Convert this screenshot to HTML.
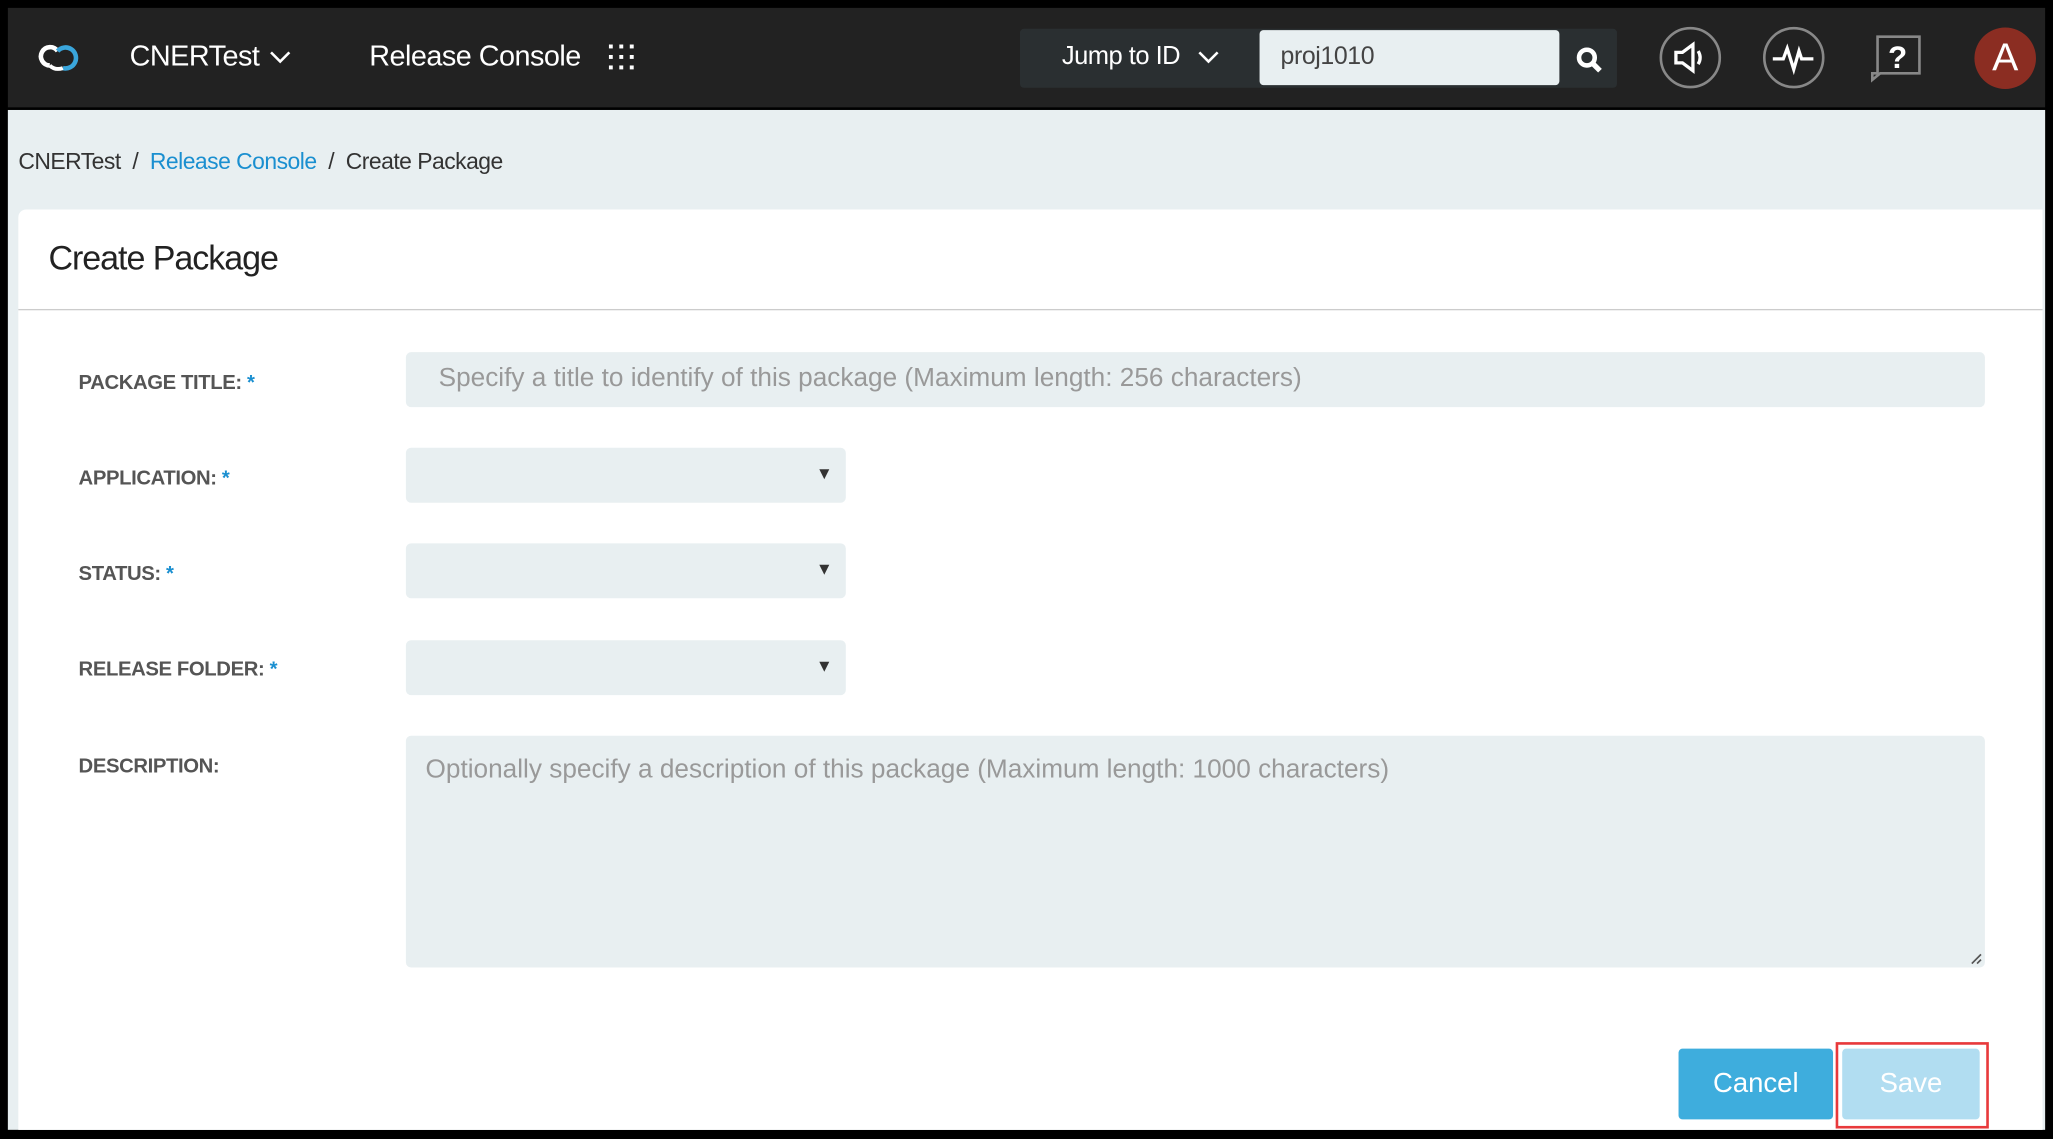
<!DOCTYPE html>
<html><head><meta charset="utf-8"><style>
html,body{margin:0;padding:0;background:#000;overflow:hidden}
body{width:2053px;height:1139px}
#w{position:absolute;left:0;top:0;width:1568px;height:870px;transform:scale(1.30931,1.30920);transform-origin:0 0;font-family:"Liberation Sans",sans-serif}
.a{position:absolute}
.hdr{left:6px;top:6px;width:1556px;height:76px;background:#222}
.t{color:#fff;font-size:22px;letter-spacing:-.4px}
.lbl{position:absolute;left:60px;font-size:15.5px;font-weight:bold;color:#555;letter-spacing:-.3px}
.lbl b{color:#1a8fd0}
.in{position:absolute;left:310px;background:#e8eff1;border-radius:4px;height:42px}
.sel{width:336px}
.sel:after{content:"▼";position:absolute;right:10px;top:12px;font-size:13px;color:#333}
.ph{color:#999;font-size:20px;position:absolute;left:25px;top:9px}
</style></head><body><div id="w">
<div class="a hdr"></div>
<svg class="a" style="left:24px;top:30px" width="44" height="28" viewBox="0 0 44 28"><path d="M14 20a7 7 0 1 1 6-11" stroke="#fff" stroke-width="3.5" fill="none"/><path d="M20 9a8 8 0 1 1 4 13" stroke="#3aa6dc" stroke-width="3.5" fill="none"/><path d="M14 20q4 4 10 2" stroke="#fff" stroke-width="3" fill="none"/></svg>
<div class="a t" style="left:99px;top:30px">CNERTest</div>
<svg class="a" style="left:206px;top:39px" width="16" height="10"><path d="M1 1l7 7 7-7" stroke="#fff" stroke-width="2" fill="none"/></svg>
<div class="a t" style="left:282px;top:30px">Release Console</div>
<svg class="a" style="left:465px;top:34px" width="20" height="20"><g fill="#fff"><rect x="0" y="0" width="3" height="3"/><rect x="8" y="0" width="3" height="3"/><rect x="16" y="0" width="3" height="3"/><rect x="0" y="8" width="3" height="3"/><rect x="8" y="8" width="3" height="3"/><rect x="16" y="8" width="3" height="3"/><rect x="0" y="16" width="3" height="3"/><rect x="8" y="16" width="3" height="3"/><rect x="16" y="16" width="3" height="3"/></g></svg>
<div class="a" style="left:779px;top:22px;width:456px;height:45px;background:#2a2f31;border-radius:3px"></div>
<div class="a t" style="left:811px;top:32px;font-size:19.5px">Jump to ID</div>
<svg class="a" style="left:915px;top:39px" width="16" height="10"><path d="M1 1l7 7 7-7" stroke="#fff" stroke-width="2" fill="none"/></svg>
<div class="a" style="left:962px;top:23px;width:229px;height:42px;background:#e8eff1;border-radius:3px"></div>
<div class="a" style="left:978px;top:33px;font-size:19px;color:#444;letter-spacing:-.3px">proj1010</div>
<svg class="a" style="left:1203px;top:35px" width="22" height="22"><circle cx="9" cy="9" r="6" stroke="#fff" stroke-width="3.5" fill="none"/><path d="M13 13l6 6" stroke="#fff" stroke-width="4"/></svg>
<svg class="a" style="left:1266px;top:19px" width="50" height="50"><circle cx="25" cy="25" r="22.5" stroke="#888" stroke-width="2" fill="none"/><path d="M14 21h5l8-6v20l-8-6h-5z" stroke="#fff" stroke-width="2.5" fill="none"/><path d="M31 20q3 5 0 10" stroke="#fff" stroke-width="2.5" fill="none"/></svg>
<svg class="a" style="left:1345px;top:19px" width="50" height="50"><circle cx="25" cy="25" r="22.5" stroke="#888" stroke-width="2" fill="none"/><path d="M9 26h8l3-8 5 16 4-14 2 6h9" stroke="#fff" stroke-width="2.5" fill="none"/></svg>
<svg class="a" style="left:1428px;top:26px" width="42" height="38"><path d="M6 2h32v28H8l-6 5V30h4z" stroke="#888" stroke-width="2" fill="none"/><text x="14" y="26" font-size="24" font-weight="bold" fill="#fff" font-family="Liberation Sans">?</text></svg>
<div class="a" style="left:1508px;top:21px;width:47px;height:47px;border-radius:50%;background:#8b2d22;color:#fff;font-size:30px;text-align:center;line-height:47px">A</div>
<div class="a" style="left:6px;top:84px;width:1556px;height:779px;background:#e8eff1"></div>
<div class="a" style="left:14px;top:113px;font-size:17.5px;color:#333;letter-spacing:-.4px">CNERTest &nbsp;/&nbsp; <span style="color:#1a8fd0">Release Console</span> &nbsp;/&nbsp; Create Package</div>
<div class="a" style="left:14px;top:160px;width:1546px;height:703px;background:#fff;border-radius:6px 0 0 0"></div>
<div class="a" style="left:37px;top:182px;font-size:26px;color:#222;letter-spacing:-.8px">Create Package</div>
<div class="a" style="left:14px;top:236px;width:1546px;height:1px;background:#ccc"></div>
<div class="lbl" style="top:284px">PACKAGE TITLE: <b>*</b></div>
<div class="in" style="top:269px;width:1206px"><span class="ph" style="top:9px">Specify a title to identify of this package (Maximum length: 256 characters)</span></div>
<div class="lbl" style="top:357px">APPLICATION: <b>*</b></div>
<div class="in sel" style="top:342px"></div>
<div class="lbl" style="top:430px">STATUS: <b>*</b></div>
<div class="in sel" style="top:415px"></div>
<div class="lbl" style="top:503px">RELEASE FOLDER: <b>*</b></div>
<div class="in sel" style="top:489px"></div>
<div class="lbl" style="top:577px">DESCRIPTION:</div>
<div class="in" style="top:562px;width:1206px;height:177px"><span class="ph" style="left:15px;top:15px">Optionally specify a description of this package (Maximum length: 1000 characters)</span>
<svg class="a" style="right:2px;bottom:2px" width="10" height="10"><path d="M9 2L2 9M9 6L6 9" stroke="#555" stroke-width="1.3"/></svg></div>
<div class="a" style="left:1282px;top:801px;width:118px;height:54px;background:#3eaddd;border-radius:3px;color:#fff;font-size:21px;text-align:center;line-height:53px">Cancel</div>
<div class="a" style="left:1402px;top:796px;width:113px;height:62px;border:2px solid #e8393b"></div>
<div class="a" style="left:1407px;top:801px;width:105px;height:54px;background:#b1ddf1;border-radius:3px;color:#fff;font-size:21px;text-align:center;line-height:53px">Save</div>
</div></body></html>
